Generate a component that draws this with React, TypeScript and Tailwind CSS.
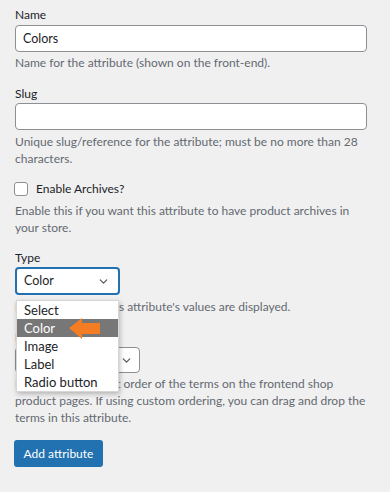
import { ChevronDown } from "lucide-react";

const font = { fontFamily: 'Lato, "Liberation Sans", sans-serif' };

function Label({ children, className = "" }: { children: React.ReactNode; className?: string }) {
  return <label className={`block text-[12px] leading-[18px] text-[#1d2327] ${className}`}>{children}</label>;
}

function Desc({ children, className = "" }: { children: React.ReactNode; className?: string }) {
  return <p className={`text-[12px] leading-[17px] text-[#646970] ${className}`}>{children}</p>;
}

const options = ["Select", "Color", "Image", "Label", "Radio button"];

export default function App() {
  return (
    <div className="min-h-[492px] w-[390px] bg-[#f0f0f1] px-[15px] pt-[6px]" style={font}>
      {/* Name */}
      <Label>Name</Label>
      <input
        readOnly
        value="Colors"
        className="mt-[1px] block h-[27px] w-[352px] rounded-[4px] border border-[#8c8f94] bg-white px-[7px] text-[12.5px] text-[#1d2327] outline-none"
      />
      <Desc className="mt-[2px]">Name for the attribute (shown on the front-end).</Desc>

      {/* Slug */}
      <Label className="mt-[14px]">Slug</Label>
      <input
        readOnly
        value=""
        className="block h-[27px] w-[352px] rounded-[4px] border border-[#8c8f94] bg-white px-[7px] text-[12.5px] outline-none"
      />
      <Desc className="mt-[3px] pr-[10px]">
        Unique slug/reference for the attribute; must be no more than 28 characters.
      </Desc>

      {/* Archives */}
      <div className="mt-[13px] flex h-[18px] items-center">
        <span className="ml-[-1px] h-[14px] w-[14px] rounded-[3px] border border-[#8c8f94] bg-white" />
        <span className="ml-[8px] text-[12px] text-[#1d2327]">Enable Archives?</span>
      </div>
      <Desc className="mt-[4px] pr-[15px]">
        Enable this if you want this attribute to have product archives in your store.
      </Desc>

      {/* Type */}
      <div className="relative">
        <Label className="mt-[13px]">Type</Label>
        <div className="flex h-[28px] w-[105px] items-center justify-between rounded-[4px] border-2 border-[#2271b1] bg-white pl-[7px] pr-[8px] text-[12.5px] text-[#1d2327]">
          <span>Color</span>
          <ChevronDown className="h-[13px] w-[13px] text-[#50575e]" strokeWidth={2.2} />
        </div>
        <Desc className="mt-[3px]">Determines how this attribute's values are displayed.</Desc>

        {/* Default sort order */}
        <Label className="mt-[14px]">Default sort order</Label>
        <div className="flex h-[26px] w-[125px] items-center justify-between rounded-[4px] border border-[#8c8f94] bg-white pl-[7px] pr-[6px] text-[12px] text-[#1d2327]">
          <span>Custom ordering</span>
          <ChevronDown className="h-[13px] w-[13px] text-[#50575e]" strokeWidth={2.2} />
        </div>
        <Desc className="mt-[2px] pr-[5px]">
          Determines the sort order of the terms on the frontend shop product pages. If using custom ordering, you can drag and drop the terms in this attribute.
        </Desc>

        {/* open dropdown */}
        <ul className="absolute left-[1px] top-[51px] w-[103px] border border-[#d6d6d6] bg-white shadow-[1px_2px_5px_rgba(0,0,0,0.25)]">
          {options.map((o) => (
            <li
              key={o}
              className={`h-[18px] pl-[7px] text-[13px] leading-[18px] ${
                o === "Color" ? "bg-[#777777] text-white" : "text-[#1d2327]"
              }`}
            >
              {o}
            </li>
          ))}
        </ul>

        {/* annotation arrow */}
        <svg className="absolute left-[54px] top-[69px]" width="33" height="22" viewBox="0 0 33 22">
          <polygon points="0,10 13,0 13,5 31,5 31,16 13,16 13,21" fill="#f47c22" />
        </svg>
      </div>

      <button className="ml-[-1px] mt-[14px] h-[27px] w-[89px] rounded-[3px] bg-[#2271b1] text-[12px] text-white">
        Add attribute
      </button>
    </div>
  );
}
